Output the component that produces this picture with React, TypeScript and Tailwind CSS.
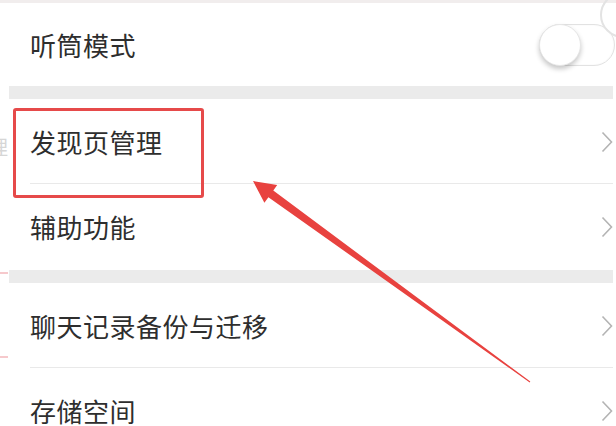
import { ChevronRight } from 'lucide-react';

const FONT = { fontFamily: '"Noto Sans CJK SC", "Noto Sans", sans-serif' };

function Chevron() {
  return (
    <svg width="12" height="22" viewBox="0 0 12 22" className="shrink-0">
      <path d="M1.5 1.5 L10.5 11 L1.5 20.5" fill="none" stroke="#b4b4b4" strokeWidth="1.6" />
    </svg>
  );
}

function Row({ label, h, chevron = true, divider = false }: { label: string; h: string; chevron?: boolean; divider?: boolean }) {
  return (
    <div className={`relative flex items-center bg-white pl-[21px] pr-0 ${h}`}>
      <span className="text-[26px] leading-none text-[#2e2e2e] tracking-[0.5px]">{label}</span>
      <div className="flex-1" />
      {chevron && <Chevron />}
      {divider && <div className="absolute bottom-0 left-[21px] right-0 h-px bg-[#e9e9e9]" />}
    </div>
  );
}

export default function App() {
  // unused import guard for bundler tree-shake
  void ChevronRight;
  return (
    <div className="relative w-[616px] h-[426px] overflow-hidden bg-white" style={FONT}>
      <div className="h-[3px] bg-[#f1eded]" />
      <div className="ml-[9px] mr-[3px] flex flex-col">
        {/* 听筒模式 */}
        <div className="relative flex items-center bg-white pl-[21px] h-[83px]">
          <span className="text-[26px] leading-none text-[#2e2e2e] tracking-[0.5px]">听筒模式</span>
          <div className="flex-1" />
          <div className="relative w-[76px] h-[42px] mr-[-2px] rounded-full border border-[#e2e2e2] bg-white shadow-[inset_0_0_2px_rgba(0,0,0,0.05)]">
            <div className="absolute left-[-1px] top-[-1px] w-[42px] h-[42px] rounded-full bg-white border border-[#e6e6e6] shadow-[0_3px_5px_rgba(0,0,0,0.22)]" />
          </div>
        </div>
        <div className="h-[13px] bg-[#ebebeb]" />
        <Row label="发现页管理" h="h-[85px]" divider />
        <Row label="辅助功能" h="h-[86px]" />
        <div className="h-[13px] bg-[#ebebeb]" />
        <Row label="聊天记录备份与迁移" h="h-[85px]" divider />
        <Row label="存储空间" h="h-[86px]" />
      </div>

      {/* faint ghost content at the left edge */}
      <span className="absolute left-[-12px] top-[132px] text-[20px] text-[#d6d6d6]">理</span>
      <div className="absolute left-0 top-[272px] w-[8px] h-[2px] bg-[#f6c9cc]" />
      <div className="absolute left-0 top-[356px] w-[8px] h-[2px] bg-[#f6c9cc]" />
      <div className="absolute right-[-30px] top-[-8px] w-[46px] h-[46px] rounded-full border-2 border-[#e3e3e3]" />

      {/* red highlight box */}
      <div className="absolute left-[13px] top-[108px] w-[191px] h-[90px] rounded-[3px] border-[3px] border-[#e64a4a]" />

      {/* red arrow */}
      <svg className="absolute inset-0" width="616" height="426" viewBox="0 0 616 426">
        <polygon
          points="253,181 277.2,185 273.3,190.6 530.3,381.6 529.7,382.4 268.4,197.2 264.4,202.8"
          fill="#e8423f"
        />
      </svg>
    </div>
  );
}
